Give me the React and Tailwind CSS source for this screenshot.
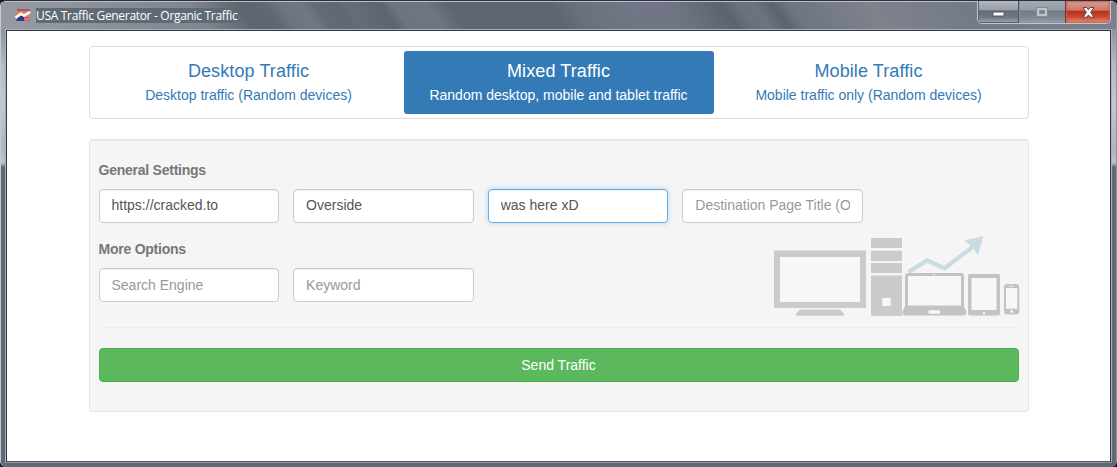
const tabs = [
  { title: 'Desktop Traffic', text: 'Desktop traffic (Random devices)' },
  { title: 'Mixed Traffic', text: 'Random desktop, mobile and tablet traffic', active: true },
  { title: 'Mobile Traffic', text: 'Mobile traffic only (Random devices)' },
];

const inputBase =
  'block h-[34px] w-[180.6px] rounded border bg-white px-3 text-sm text-[#555] outline-none placeholder:text-[#999]';
const inputIdle = 'border-[#ccc] shadow-[inset_0_1px_1px_rgba(0,0,0,0.075)]';
const inputFocus =
  'border-[#66afe9] shadow-[inset_0_1px_1px_rgba(0,0,0,0.075),0_0_5px_rgba(102,175,233,0.5)]';

function Field({ value, placeholder, focused, pad = 'pb-[3px]' }) {
  return (
    <input
      className={`${inputBase} ${pad} ${focused ? inputFocus : inputIdle}`}
      defaultValue={value}
      placeholder={placeholder}
    />
  );
}

function AppIcon() {
  return (
    <svg width="16" height="13" viewBox="0 0 16 13" className="shrink-0">
      <path d="M2 0H14L11 6H1Z" fill="#ef7d35" />
      <path d="M2 0H15V2H2Z" fill="#a8508a" />
      <path d="M1 12L3 8L8 6L10 12Z" fill="#263f86" />
      <path d="M9 6L15 4V12H9Z" fill="#dc8198" />
      <path d="M9 8.5H15M9 11H15" stroke="#c74f6d" strokeWidth="1" />
      <path d="M.5 8.8L6 4.8L9 6.5L15 3" fill="none" stroke="#fff" strokeWidth="2.5" />
    </svg>
  );
}

function WindowButtons() {
  return (
    <div className="flex h-[23px] w-[134px] overflow-hidden rounded-b-[5px] border border-t-0 border-[#c1c5cc]">
      <div className="flex w-[41px] items-center justify-center border-r border-[#4a525d] bg-[linear-gradient(#b4b8bf_0%,#979ca6_42%,#626a77_44%,#717a86_75%,#a2a8b0_100%)] pt-[3px] shadow-[inset_1px_-1px_0_#59616c]">
        <svg width="13" height="6" viewBox="0 0 13 6">
          <rect x="1" y="1" width="11" height="4" rx=".5" fill="#fff" stroke="#4d5360" />
        </svg>
      </div>
      <div className="flex w-[46px] items-center justify-center bg-[linear-gradient(#a4a9b2_0%,#969ca6_42%,#747c89_44%,#7e8690_75%,#9ba2aa_100%)] shadow-[inset_1px_-1px_0_#8e959f]">
        <svg width="12" height="10" viewBox="0 0 12 10">
          <path d="M.5 .5H11.5V9.5H.5ZM3.5 3.5H8.5V6.5H3.5Z" fill="#c0c4c9" fillRule="evenodd" stroke="#858b95" />
        </svg>
      </div>
      <div className="flex flex-1 items-center justify-center border-l border-[#8d2a22] bg-[linear-gradient(#dda294_0%,#cd7564_42%,#b5311e_46%,#c8452f_70%,#ee9078_100%)] shadow-[inset_0_0_2px_1px_#b5665c]">
        <svg width="13" height="11" viewBox="0 0 13 11">
          <path
            d="M1 .5H4.7L6.5 2.7L8.3 .5H12L8.7 5.3L12 10.2H8.2L6.5 8L4.8 10.2H1L4.3 5.3Z"
            fill="#f5f5f5"
            stroke="#534850"
          />
        </svg>
      </div>
    </div>
  );
}

function Devices() {
  return (
    <svg width="247" height="86" viewBox="773 234 247 86" className="block">
      <g fill="#cbcbcb">
        <path d="M774 250.5H866V308H774ZM780 257V302H860V257Z" fillRule="evenodd" />
        <path d="M800 309.5H840L844 314V315.8H796V314Z" />
        <path d="M871 238H902V248H871ZM871 250.7H902V261H871ZM871 263H902V273H871Z" />
        <path d="M871 275.5H902V316H871ZM882.5 298V306H890.5V298Z" fillRule="evenodd" />
      </g>
      <path d="M780 257H860V302H780ZM882.5 298H890.5V306H882.5Z" fill="#f7f7f7" />
      <path d="M908.5 272L927 260.5L944.5 268.2L974 246" fill="none" stroke="#c9dce2" strokeWidth="4.3" />
      <path d="M983.5 236L964 240.2L970 245L969 249L973 248.5L978 255Z" fill="#c9dce2" />
      <g fill="#c3c3c3">
        <path d="M908 273H961Q964 273 964 276V306L966.5 312Q966.5 315.5 963 315.5H905.5Q902 315.5 902.3 312L905 306V276Q905 273 908 273Z" />
        <rect x="968" y="274" width="32" height="41.5" rx="2" />
        <rect x="1004" y="284" width="15.3" height="30.5" rx="3.2" />
      </g>
      <g fill="#f7f7f7">
        <rect x="908" y="276" width="53" height="29.5" />
        <rect x="928.5" y="310.3" width="11.5" height="3.4" rx="1" />
        <circle cx="934" cy="274.7" r=".8" />
        <rect x="971.5" y="278" width="25" height="32" />
        <circle cx="984" cy="313" r="1.2" />
        <rect x="1006" y="288" width="11.3" height="20.8" />
        <circle cx="1011.7" cy="311.5" r="1.5" />
        <rect x="1009" y="285.8" width="5" height=".8" />
      </g>
    </svg>
  );
}

export default function App() {
  return (
    <div className="h-[467px] w-[1117px] overflow-hidden bg-[#16181c] font-['Liberation_Sans',Arial,sans-serif]">
      <div className="flex h-full flex-col overflow-hidden rounded-[6px] border-x border-t border-t-[#2f2f3a] border-l-[#c5cad0] border-r-[#8f959d] bg-[#5f6875]">
        <header className="flex h-[28px] shrink-0 items-start justify-between border-t border-[#c0bfca] bg-[linear-gradient(55deg,#979ba2_0%,#91969e_6%,#868d96_12%,#808791_18%,#5c6570_22.5%,#5f6974_24.8%,#6b7480_26%,#707884_28%,#616b76_29.2%,#606973_31%,#646e78_32%,#5b6470_35%,#6b7480_36%,#6e7682_39%,#5d6672_41%,#5d6772_50%,#68727f_52%,#707685_57%,#717585_60%,#67717d_62%,#5a6470_65%,#697380_66.5%,#6a7480_68%,#5a6470_69.5%,#6d7582_71%,#7e828d_78%,#747a88_86%,#7b828d_100%)]">
          <div className="flex items-start">
            <div className="pl-[14px] pt-[7px]">
              <AppIcon />
            </div>
            <div className="ml-[5px] mt-[6px] h-[15px] w-[203px] whitespace-nowrap bg-[#606a76] font-['Open_Sans',sans-serif] text-[12px] leading-[15px] tracking-[-0.31px] text-white">
              USA Traffic Generator - Organic Traffic
            </div>
          </div>
          <div className="mr-[5px] -mt-px">
            <WindowButtons />
          </div>
        </header>
        <div className="flex min-h-0 flex-1 bg-[linear-gradient(#8c949d_0px,#b5bcc3_38px,#c2c8cd_75px,#aeb6bd_120px,#bcc3c8_134px,#5d6976_138px,#606a77_100%)] px-[4px] pb-[4px]">
          <div className="flex-1 border border-[#a8afb8] border-b-[#8c939e]">
            <main className="flex h-full flex-col items-center border-x border-t border-[#303843] bg-white pt-[15px] shadow-[0_-1px_0_#4f5762_inset]">
              <nav className="grid h-[73px] w-[940px] shrink-0 grid-cols-3 rounded border border-[#ddd] bg-white p-1">
                {tabs.map((tab) => (
                  <div
                    key={tab.title}
                    className={`flex flex-col items-center rounded-[3px] pt-[10px] ${tab.active ? 'bg-[#337ab7] text-white' : 'text-[#337ab7]'}`}
                  >
                    <h4 className="text-[18px] leading-5 tracking-[0.1px]">{tab.title}</h4>
                    <p className="mt-1 text-sm leading-5">{tab.text}</p>
                  </div>
                ))}
              </nav>
              <section className="mt-5 h-[273px] w-[940px] shrink-0 rounded-[3px] border border-[#e3e3e3] bg-[#f5f5f5] px-[9px] pt-5 shadow-[inset_0_1px_1px_rgba(0,0,0,0.05)]">
                <h5 className="text-sm font-bold leading-5 tracking-[-0.24px] text-[#777]">General Settings</h5>
                <div className="mt-[9px] flex gap-[14px]">
                  <Field value="https://cracked.to" />
                  <Field value="Overside" />
                  <Field value="was here xD" focused />
                  <Field placeholder="Destination Page Title (Optional)" />
                </div>
                <div className="flex h-[104px] justify-between">
                  <div className="pt-4">
                    <h5 className="text-sm font-bold leading-5 tracking-[-0.24px] text-[#777]">More Options</h5>
                    <div className="mt-[9px] flex gap-[14px]">
                      <Field placeholder="Search Engine" pad="pb-px" />
                      <Field placeholder="Keyword" pad="pb-px" />
                    </div>
                  </div>
                  <div className="-mr-px pt-[11px]">
                    <Devices />
                  </div>
                </div>
                <hr className="border-[#eee]" />
                <button className="mt-5 h-[34px] w-full rounded border border-[#4cae4c] bg-[#5cb85c] text-sm text-white">
                  Send Traffic
                </button>
              </section>
            </main>
          </div>
        </div>
      </div>
    </div>
  );
}
